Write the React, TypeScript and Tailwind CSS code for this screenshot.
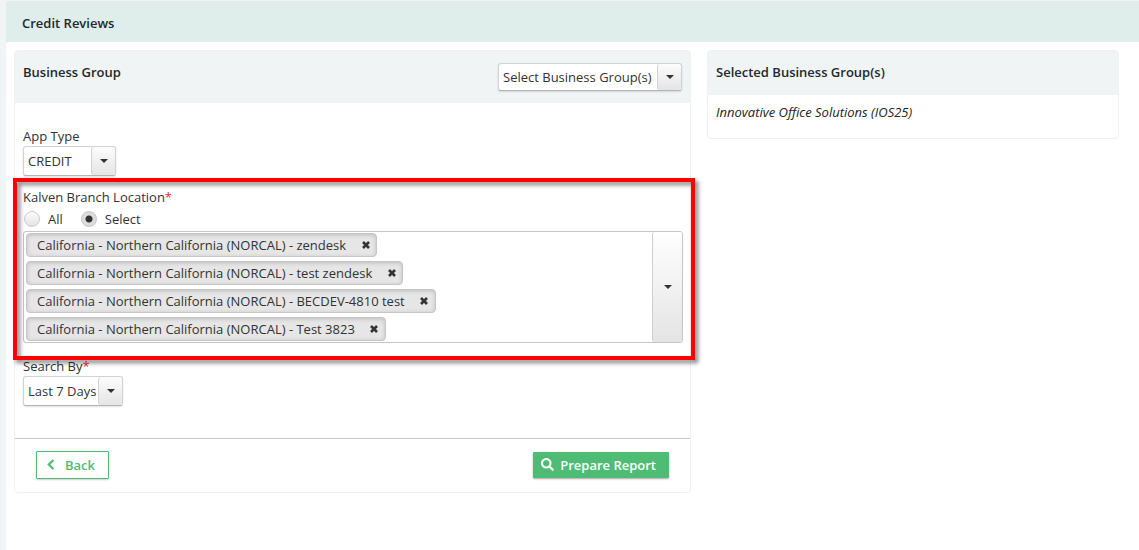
import React, { useState } from 'react';
import { FaSearch } from 'react-icons/fa';

const BRANCHES = [
  'California - Northern California (NORCAL) - zendesk',
  'California - Northern California (NORCAL) - test zendesk',
  'California - Northern California (NORCAL) - BECDEV-4810 test',
  'California - Northern California (NORCAL) - Test 3823',
];

function Caret() {
  return (
    <svg width="8" height="4" viewBox="0 0 8 4" fill="#333" aria-hidden="true">
      <path d="M0 0h8L4 4z" />
    </svg>
  );
}

type PickerProps = {
  id: string;
  options: string[];
  className: string;
  label?: string;
};

function Picker({ id, options, className, label }: PickerProps) {
  return (
    <div className={`flex rounded-[3px] border border-[#d2d2d2] border-b-[#b4b4b4] bg-white shadow-[0_1px_2px_rgba(0,0,0,0.12)] ${className}`}>
      <select id={id} aria-label={label} className="min-w-0 flex-1 appearance-none bg-transparent pb-px pl-1 outline-none">
        {options.map(option => <option key={option}>{option}</option>)}
      </select>
      <span className="pointer-events-none flex w-6 items-center justify-center rounded-[3px] border-l border-[#d2d2d2] bg-linear-to-b from-[#fcfcfc] to-[#e5e5e5]">
        <Caret />
      </span>
    </div>
  );
}

export default function App() {
  const [scope, setScope] = useState('select');
  const [branches, setBranches] = useState(BRANCHES);

  const removeBranch = (branch: string) => {
    setBranches(prev => prev.filter(item => item !== branch));
  };

  return (
    <div className="flex min-h-screen flex-col bg-[#f0f4f5] pt-px pl-1.5 font-['Open_Sans','Noto_Sans',sans-serif] text-[13px] leading-[18px] text-[#333]">
      <header className="flex h-[41px] items-center rounded-tl bg-[#dfeeea] px-4 pt-0.5">
        <h1 className="font-semibold text-[#23282c]">Credit Reviews</h1>
      </header>

      <main className="grid flex-1 grid-cols-[677fr_412fr] items-start gap-4 rounded-tl bg-white pt-2 pr-5 pl-2">
        <section className="rounded border border-[#f0f1f2]">
          {/* Card header */}
          <div className="flex h-[52px] items-start justify-between bg-[#f0f4f5] pt-3 pr-2 pl-2">
            <h2 className="font-semibold text-[#23282c]">Business Group</h2>
            <Picker
              id="group"
              label="Select Business Group(s)"
              options={['Select Business Group(s)']}
              className="h-7 w-[184px]"
            />
          </div>

          <div className="pt-6 pr-[7px] pb-8 pl-2">
            <label htmlFor="app-type" className="block h-[19px]">App Type</label>
            <Picker id="app-type" options={['CREDIT']} className="h-[30px] w-[93px]" />

            {/* Branch location, highlighted */}
            <div role="group" aria-labelledby="branch-label" className="relative mt-3">
              <div id="branch-label" className="h-[19px]">Kalven Branch Location<span className="text-[#ff2a2a]">*</span></div>
              <div className="flex h-6 items-center gap-[18px] pb-px pl-px">
                {[['all', 'All'], ['select', 'Select']].map(([value, text]) => (
                  <label key={value} className="flex items-center gap-2">
                    <input
                      type="radio"
                      name="scope"
                      value={value}
                      checked={scope === value}
                      onChange={() => setScope(value)}
                      className="size-4 appearance-none rounded-full border border-[#ccc] bg-linear-to-b from-[#fcfcfc] to-[#e4e4e4] checked:border-[#c4c4c4] checked:bg-[radial-gradient(circle,#333_3px,#dcdcdc_4px)]"
                    />
                    {text}
                  </label>
                ))}
              </div>
              <div className="flex rounded-[3px] border border-[#c5c5c5]">
                <ul className="flex flex-1 flex-col items-start gap-1 py-px pl-0.5">
                  {branches.map(branch => (
                    <li key={branch} className="flex h-6 items-center rounded border border-[#c6c6c6] bg-[#e6e6e6] pr-1.5 pl-2.5 shadow-[inset_0_1px_4px_rgba(0,0,0,0.18)]">
                      {branch}
                      <button
                        type="button"
                        aria-label={`Remove ${branch}`}
                        onClick={() => removeBranch(branch)}
                        className="ml-[15px] flex size-[9px] items-center justify-center"
                      >
                        <svg width="8" height="8" viewBox="0 0 8 8" stroke="#333" strokeWidth="2.6" aria-hidden="true">
                          <path d="M1 1l6 6M7 1L1 7" />
                        </svg>
                      </button>
                    </li>
                  ))}
                </ul>
                <button
                  type="button"
                  aria-label="Show branches"
                  className="flex w-[30px] items-center justify-center rounded-[3px] border-l border-[#cfcfcf] bg-linear-to-b from-white to-[#e4e4e4]"
                >
                  <Caret />
                </button>
              </div>
              <div className="pointer-events-none absolute -top-2.5 -right-3 -bottom-[17px] -left-2.5 border-4 border-[#f00] drop-shadow-[3px_3px_2px_rgba(0,0,0,0.5)]" />
            </div>

            <label htmlFor="search-by" className="mt-3.5 block h-[19px]">
              Search By<span className="text-[#ff2a2a]">*</span>
            </label>
            <Picker id="search-by" options={['Last 7 Days']} className="h-[30px] w-[100px]" />
          </div>

          <footer className="flex h-[54px] items-center justify-between border-t border-[#c5c9cd] px-[21px] pb-0.5 font-semibold">
            <button type="button" className="flex h-7 items-center gap-2.5 rounded-[1px] border border-[#4ebc74] pr-[13px] pl-2.5 text-[#4ebc74] shadow-[0_1px_2px_rgba(0,0,0,0.2)]">
              <svg width="8" height="12" viewBox="0 0 8 12" fill="none" stroke="currentColor" strokeWidth="2.2" aria-hidden="true">
                <path d="M6.5 1L1.8 5.5l4.7 4.5" />
              </svg>
              Back
            </button>
            <button type="button" className="flex h-[26px] items-center gap-1.5 rounded-[1px] bg-[#4ebc74] pr-[13px] pl-2 text-white shadow-[0_1px_2px_rgba(0,0,0,0.35)]">
              <FaSearch size={13} />
              Prepare Report
            </button>
          </footer>
        </section>

        <section className="rounded border border-[#f0f1f2]">
          <div className="h-11 bg-[#f0f4f5] px-2 pt-3">
            <h2 className="font-semibold text-[#23282c]">Selected Business Group(s)</h2>
          </div>
          <p className="h-[43px] px-2 pt-2 text-[#222] italic">Innovative Office Solutions (IOS25)</p>
        </section>
      </main>
    </div>
  );
}
